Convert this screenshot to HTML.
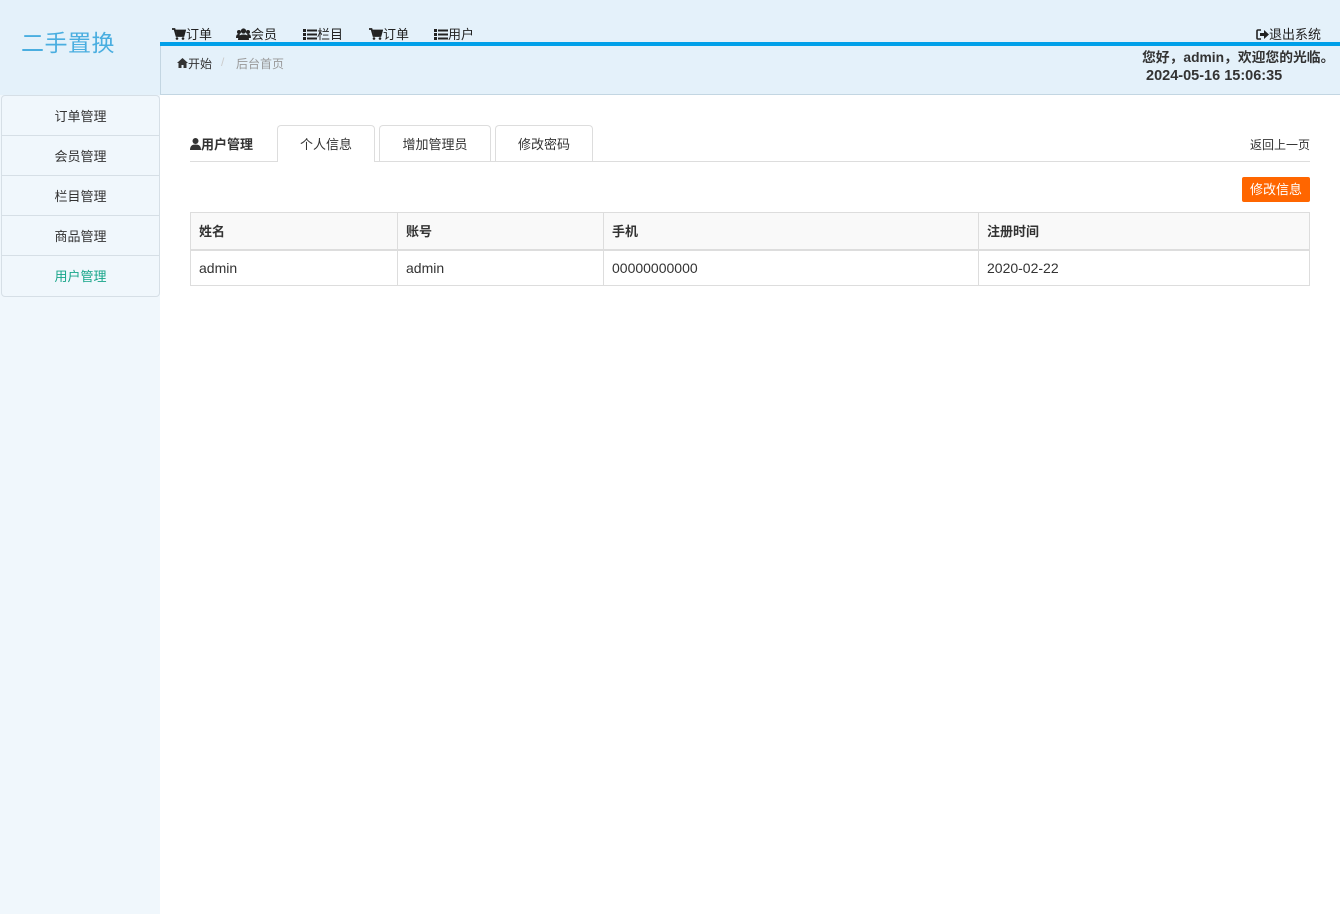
<!DOCTYPE html>
<html><head><meta charset="utf-8"><style>
*{margin:0;padding:0;box-sizing:border-box}
body{width:1340px;height:914px;background:#fff;font-family:"Liberation Sans","Noto Sans CJK SC",sans-serif;font-size:13px;color:#333;position:relative;overflow:hidden}
.top{position:absolute;left:0;top:0;width:1340px;height:95px;background:#e4f1fa}
.logo{position:absolute;left:21px;top:24px;font-size:23px;color:#4aaee0;letter-spacing:0.5px}
.nav{position:absolute;left:172px;top:24px;font-size:13px;color:#222}
.nav span{position:absolute;white-space:nowrap}
.nav svg{vertical-align:-1px}
.bar{position:absolute;left:160px;top:42px;width:1180px;height:4px;background:#00a0e9}
.crumb{position:absolute;left:160px;top:46px;width:1180px;height:49px;border-left:1px solid #c3d6e2;border-bottom:1px solid #c3d6e2}
.side{position:absolute;left:0;top:95px;width:160px;height:819px;background:#f0f7fc}
.menu{position:absolute;left:1px;top:0;width:159px;border:1px solid #d6dfe6;border-radius:4px;background:#f0f7fc}
.menu div{height:40px;line-height:41px;text-align:center;border-bottom:1px solid #d6dfe6;font-size:13px;color:#333}
.menu div:last-child{border-bottom:none;color:#17a589}
.tab{position:absolute;top:125px;height:37px;border:1px solid #ddd;border-bottom:none;border-radius:4px 4px 0 0;text-align:center;line-height:37px;font-size:13px;background:#fff}
table{position:absolute;left:190px;top:212px;width:1120px;border-collapse:collapse}
td,th{border:1px solid #ddd;padding:0 8px;text-align:left;font-size:13px}
th{height:37px;background:#f9f9f9;border-bottom:2px solid #ddd}
td{height:36px;font-size:14px}
</style></head><body>
<div class="top">
<div class="logo">二手置换</div>
<div class="nav">
<span style="left:0"><svg width="14" height="12" viewBox="0 0 14 12"><path d="M0 1h2.5l2 7h7l1.5-5.5H3.5" fill="none" stroke="#222" stroke-width="1.8"/><path d="M4 3h9l-1.4 4.5H5z" fill="#222"/><circle cx="5" cy="10.5" r="1.3" fill="#222"/><circle cx="11" cy="10.5" r="1.3" fill="#222"/></svg>订单</span>
<span style="left:64px"><svg width="15" height="12" viewBox="0 0 15 12"><circle cx="7.5" cy="3" r="2.6" fill="#222"/><circle cx="3" cy="4" r="2" fill="#222"/><circle cx="12" cy="4" r="2" fill="#222"/><path d="M2 12c0-4 2-5.5 5.5-5.5S13 8 13 12z" fill="#222"/><path d="M0 10c0-3 1-4 3-4l1 .5-1 3.5z M15 10c0-3-1-4-3-4l-1 .5 1 3.5z" fill="#222"/></svg>会员</span>
<span style="left:131px"><svg width="14" height="11" viewBox="0 0 14 11"><path d="M0 0h3v3H0zM0 4h3v3H0zM0 8h3v3H0zM4 0.5h10v2H4zM4 4.5h10v2H4zM4 8.5h10v2H4z" fill="#222"/></svg>栏目</span>
<span style="left:197px"><svg width="14" height="12" viewBox="0 0 14 12"><path d="M0 1h2.5l2 7h7l1.5-5.5H3.5" fill="none" stroke="#222" stroke-width="1.8"/><path d="M4 3h9l-1.4 4.5H5z" fill="#222"/><circle cx="5" cy="10.5" r="1.3" fill="#222"/><circle cx="11" cy="10.5" r="1.3" fill="#222"/></svg>订单</span>
<span style="left:262px"><svg width="14" height="11" viewBox="0 0 14 11"><path d="M0 0h3v3H0zM0 4h3v3H0zM0 8h3v3H0zM4 0.5h10v2H4zM4 4.5h10v2H4zM4 8.5h10v2H4z" fill="#222"/></svg>用户</span>
</div>
<div style="position:absolute;left:1256px;top:24px;font-size:13px;color:#222;white-space:nowrap"><svg width="13" height="11" viewBox="0 0 13 11" style="vertical-align:-1px"><path d="M5 1H2a1 1 0 0 0-1 1v7a1 1 0 0 0 1 1h3" fill="none" stroke="#222" stroke-width="1.6"/><path d="M4 4h4V1l5 4.5L8 10V7H4z" fill="#222"/></svg>退出系统</div>
<div style="position:absolute;left:1142px;top:49px;line-height:18px;font-size:13.8px;font-weight:bold;color:#333;white-space:nowrap">您好，admin，欢迎您的光临。</div>
<div style="position:absolute;left:1146px;top:67px;line-height:18px;font-size:14.5px;font-weight:bold;color:#333">2024-05-16 15:06:35</div>
</div>
<div class="bar"></div>
<div class="crumb"><span style="position:absolute;left:16px;top:9px;font-size:12px;color:#333"><svg width="11" height="10" viewBox="0 0 11 10" style="vertical-align:0"><path d="M5.5 0L0 5h1.5v5h3V7h2v3h3V5H11z" fill="#333"/></svg>开始</span><span style="position:absolute;left:60px;top:9px;font-size:12px;color:#ccc">/</span><span style="position:absolute;left:75px;top:9px;font-size:12px;color:#999">后台首页</span></div>
<div class="side"><div class="menu"><div>订单管理</div><div>会员管理</div><div>栏目管理</div><div>商品管理</div><div>用户管理</div></div></div>
<div style="position:absolute;left:190px;top:161px;width:1120px;height:1px;background:#ddd"></div>
<div style="position:absolute;left:190px;top:134px;font-size:13px;font-weight:bold;color:#333;white-space:nowrap"><svg width="11" height="12" viewBox="0 0 11 12" style="vertical-align:-1px"><circle cx="5.5" cy="3" r="3" fill="#333"/><path d="M0 12c0-4 2-5.5 5.5-5.5S11 8 11 12z" fill="#333"/></svg>用户管理</div>
<div class="tab" style="left:277px;width:98px;height:37px">个人信息</div>
<div class="tab" style="left:379px;width:112px;height:36px">增加管理员</div>
<div class="tab" style="left:495px;width:98px;height:36px">修改密码</div>
<div style="position:absolute;left:1250px;top:136px;font-size:12px;color:#333">返回上一页</div>
<div style="position:absolute;left:1242px;top:177px;width:68px;height:25px;background:#f60;color:#fff;border-radius:2px;text-align:center;line-height:25px;font-size:13px">修改信息</div>
<table><tr><th style="width:207px">姓名</th><th style="width:206px">账号</th><th style="width:375px">手机</th><th>注册时间</th></tr>
<tr><td>admin</td><td>admin</td><td>00000000000</td><td>2020-02-22</td></tr></table>
</body></html>
